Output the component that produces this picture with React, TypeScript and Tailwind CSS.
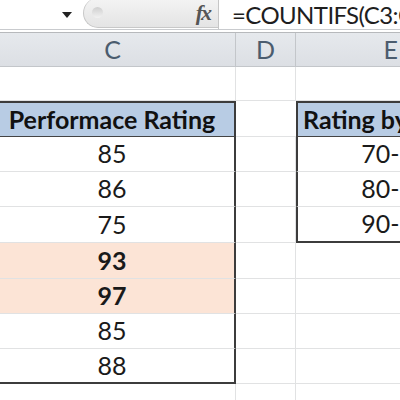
import React from "react";

const font = { fontFamily: "Lato, 'Noto Sans', sans-serif" };

type Row = {
  value: string;
  h: string;
  bold?: boolean;
  range?: string;
  last?: boolean;
};

const rows: Row[] = [
  { value: "85", h: "h-[35px]", range: "70-79" },
  { value: "86", h: "h-[35px]", range: "80-89" },
  { value: "75", h: "h-[36px]", range: "90-99", last: true },
  { value: "93", h: "h-[36px]", bold: true },
  { value: "97", h: "h-[35px]", bold: true },
  { value: "85", h: "h-[35px]" },
  { value: "88", h: "h-[35px]" },
];

function FormulaBar() {
  return (
    <div className="flex h-[30px] border-b border-[#c9cbce] bg-white">
      <div className="w-[83px] flex items-center justify-end pr-[11px]">
        <div className="w-0 h-0 border-l-[5px] border-r-[5px] border-t-[6px] border-l-transparent border-r-transparent border-t-[#222]" />
      </div>
      <div className="w-[135px] h-[30px] mt-[-2px] flex items-center rounded-l-[16px] border border-r-0 border-t-0 border-[#c8c8c8] bg-gradient-to-b from-[#f4f4f4] to-[#e4e4e4]">
        <div className="ml-[8px] w-[11px] h-[11px] rounded-full bg-gradient-to-b from-[#cfcfcf] to-[#f2f2f2]" />
        <span
          className="ml-auto mr-[8px] text-[22px] italic font-bold text-[#555] tracking-[-2px]"
          style={{ fontFamily: "'Liberation Serif', serif" }}
        >
          fx
        </span>
      </div>
      <div className="w-px bg-[#c6c6c6]" />
      <div
        className="flex-1 pl-[13px] flex items-center whitespace-nowrap overflow-hidden text-[24px] tracking-[-0.6px] text-[#1e1e1e]"
        style={font}
      >
        =COUNTIFS(C3:C9,"&gt;=70",C3:C9,"&lt;=79")
      </div>
    </div>
  );
}

export default function App() {
  return (
    <div className="w-[400px] h-[400px] overflow-hidden bg-white" style={font}>
      <FormulaBar />
      <div className="h-[3px] bg-white border-b border-[#b7b9bc]" />

      <div className="ml-[-10px] w-[500px]">
        {/* column letters */}
        <div className="flex h-[34px] bg-gradient-to-b from-[#e6e9ed] to-[#dcdfe4] border-b border-[#c3c6ca] text-[25px] text-[#4b5c6e]">
          <div className="w-[246px] flex items-center justify-center border-r border-[#c3c6ca]">C</div>
          <div className="w-[60px] flex items-center justify-center border-r border-[#c3c6ca]">D</div>
          <div className="w-[194px] flex items-center justify-end pr-[92px]">E</div>
        </div>

        {/* empty first row */}
        <div className="flex h-[34px]">
          <div className="w-[246px] border-r border-b border-[#e1e2e3]" />
          <div className="w-[60px] border-r border-b border-[#e1e2e3]" />
          <div className="w-[194px] border-b border-[#e1e2e3]" />
        </div>

        {/* table headings */}
        <div className="flex h-[36px] text-[25px] font-bold text-[#111]">
          <div className="w-[246px] flex items-center justify-center bg-[#b8cce4] border-t-2 border-r-2 border-b border-t-[#3c3c3c] border-r-[#3c3c3c] border-b-[#444]">
            Performace Rating
          </div>
          <div className="w-[60px] border-b border-[#e1e2e3]" />
          <div className="w-[194px] flex items-center pl-[5px] whitespace-nowrap bg-[#b8cce4] border-t-2 border-l-2 border-b border-t-[#3c3c3c] border-l-[#3c3c3c] border-b-[#444]">
            Rating by Range
          </div>
        </div>

        {rows.map((r, i) => (
          <div key={i} className={`flex ${r.h} text-[25px] text-[#1a1a1a]`}>
            <div
              className={`w-[246px] flex items-center justify-center border-r-2 border-r-[#3c3c3c] ${
                i === rows.length - 1 ? "border-b-2 border-b-[#3c3c3c]" : "border-b border-b-[#e1e2e3]"
              } ${r.bold ? "bg-[#fce4d6] font-bold" : ""}`}
            >
              {r.value}
            </div>
            <div className="w-[60px] border-r border-b border-[#e1e2e3]" />
            {r.range ? (
              <div
                className={`w-[194px] flex items-center justify-center pl-[2px] border-l-2 border-l-[#3c3c3c] ${
                  r.last ? "border-b-2 border-b-[#3c3c3c]" : "border-b border-b-[#e1e2e3]"
                }`}
              >
                {r.range}
              </div>
            ) : (
              <div className="w-[194px] border-b border-[#e1e2e3]" />
            )}
          </div>
        ))}

        <div className="flex h-[20px]">
          <div className="w-[246px] border-r border-[#e1e2e3]" />
          <div className="w-[60px] border-r border-[#e1e2e3]" />
          <div className="w-[194px]" />
        </div>
      </div>
    </div>
  );
}
